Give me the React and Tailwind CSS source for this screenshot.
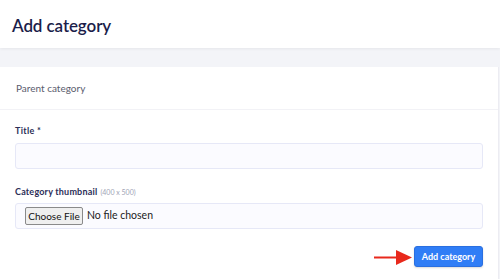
export default function App() {
  const font = { fontFamily: 'Lato, "Open Sans", sans-serif' };
  return (
    <div className="w-[500px] h-[279px] bg-[#f3f4f8] overflow-hidden flex flex-col" style={font}>
      <div className="h-[48px] shrink-0 bg-white flex items-center px-[12px] pt-[3px] shadow-[0_1px_3px_rgba(0,0,0,0.06)] relative z-10">
        <h1 className="text-[17px] font-semibold text-[#1b1d4a] tracking-[-0.1px]">Add category</h1>
      </div>
      <div className="h-[19px] shrink-0" />
      <div className="w-[499px] flex-1 bg-white border-r border-[#ececf2] flex flex-col">
        <div className="h-[43px] shrink-0 flex items-center px-[16px] border-b border-[#f2f2f6] text-[10px] text-[#5a5c6e]">
          Parent category
        </div>
        <div className="pl-[15px] pr-[15px] flex flex-col">
          <div className="mt-[14px] h-[14px] flex items-center text-[9px] font-bold text-[#2b2e57] tracking-[0.3px]">Title *</div>
          <div className="mt-[5px] h-[26px] rounded-[3px] border border-[#e6e8f7] bg-[#fbfbff]" />
          <div className="mt-[16px] h-[14px] flex items-center text-[9px] font-bold text-[#2b2e57] tracking-[0.2px]">
            Category thumbnail
            <span className="ml-[3px] font-normal text-[7px] text-[#a0a3b5] tracking-normal">(400 x 500)</span>
          </div>
          <div className="mt-[4px] h-[26px] rounded-[3px] border border-[#e6e8f7] bg-[#fbfbff] flex items-center pl-[9px]">
            <div className="h-[18px] w-[58px] rounded-[2px] border border-[#8a8a8a] bg-[#efefef] flex items-center justify-center text-[10px] text-[#111] whitespace-nowrap">
              Choose File
            </div>
            <span className="ml-[4px] text-[10.5px] text-[#222]">No file chosen</span>
          </div>
          <div className="mt-[17px] flex justify-end items-center">
            <div className="relative">
              <svg className="absolute left-[-41px] top-[3px]" width="40" height="16" viewBox="0 0 40 16">
                <line x1="1" y1="8.5" x2="26" y2="8.5" stroke="#e8291c" strokeWidth="2" />
                <polygon points="23,1 39,8.5 23,16" fill="#e8291c" />
              </svg>
              <button className="h-[21px] w-[69px] rounded-[3px] bg-[#2f7df6] border border-[#2a6fe0] text-white text-[9px] font-bold flex items-center justify-center shadow-[0_1px_2px_rgba(0,0,0,0.15)]">
                Add category
              </button>
            </div>
          </div>
        </div>
      </div>
    </div>
  );
}
